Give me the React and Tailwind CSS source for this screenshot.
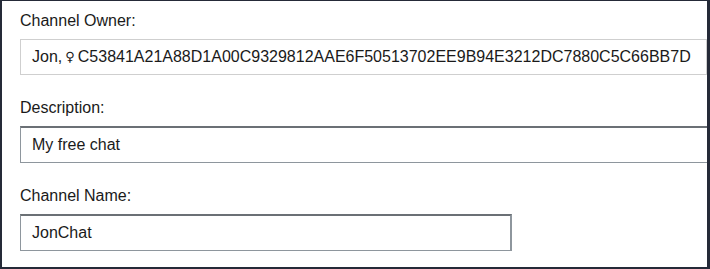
import React from 'react';

const Field = ({ label, children, last }) => (
  <div className={last ? '' : 'mb-[24px]'}>
    <div className="text-[16px] leading-[18px] text-[#1a1a1a] mb-[9px]">{label}</div>
    {children}
  </div>
);

const App = () => {
  return (
    <div
      className="w-[710px] h-[269px] bg-white overflow-hidden border-t border-l-2 border-r-[3px] border-b-2 border-[#252a38] pt-[11px] pl-[18px]"
      style={{ fontFamily: '"Liberation Sans", Arial, sans-serif' }}
    >
      <Field label="Channel Owner:">
        <div className="w-[687px] h-[36px] border border-[#cfcfcf] flex items-center pl-[11px] text-[16px] text-[#1a1a1a] whitespace-nowrap">
          Jon,{' '}
          <span className="text-[13px] mx-[3px]" style={{ fontFamily: '"DejaVu Sans", sans-serif' }}>♀</span>
          C53841A21A88D1A00C9329812AAE6F50513702EE9B94E3212DC7880C5C66BB7D
        </div>
      </Field>

      <Field label="Description:">
        <div className="w-[720px] h-[37px] border border-t-2 border-[#8e969d] border-t-[#6b7075] flex items-center pl-[11px] text-[16px] text-[#1a1a1a]">
          My free chat
        </div>
      </Field>

      <Field label="Channel Name:" last>
        <div className="w-[492px] h-[37px] border border-t-2 border-r-2 border-[#8e969d] border-t-[#6b7075] flex items-center pl-[11px] text-[16px] text-[#1a1a1a]">
          JonChat
        </div>
      </Field>
    </div>
  );
};

export default App;
